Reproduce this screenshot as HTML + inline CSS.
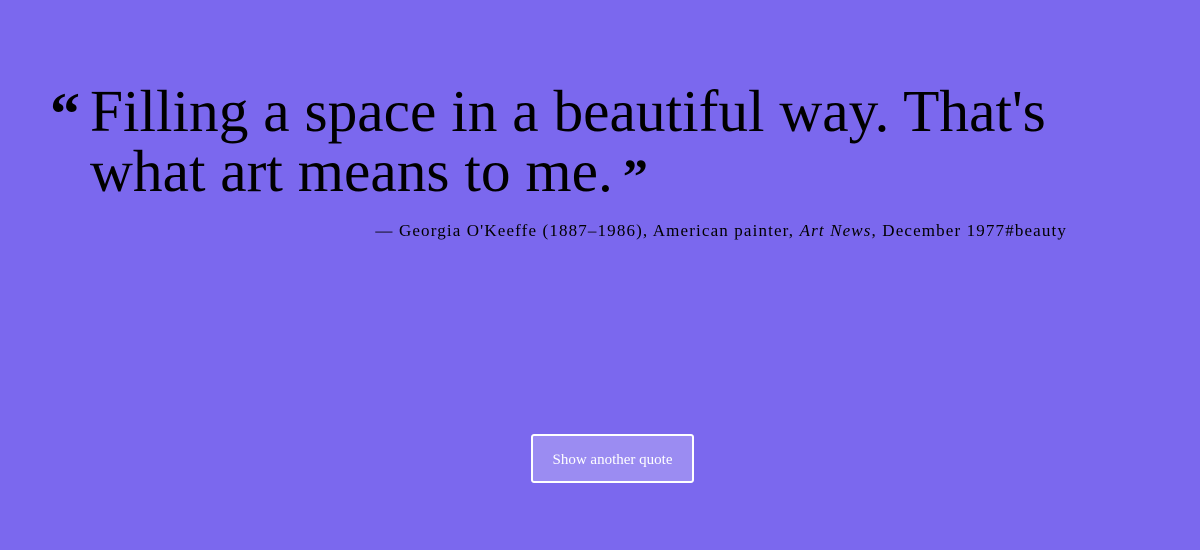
<!DOCTYPE html>
<html><head><style>
html,body{margin:0;padding:0;width:1200px;height:550px;background:#7b68ee;overflow:hidden;font-family:"Liberation Serif",serif;}
.q{position:absolute;left:90px;top:81px;width:1100px;font-size:59.4px;line-height:60px;color:#000;white-space:nowrap;}
.lq{position:absolute;left:50px;top:84px;font-size:60px;font-weight:bold;line-height:60px;}
.rq{font-size:50px;font-weight:bold;vertical-align:-2px;margin-left:10px;}
.a{position:absolute;right:133px;top:221px;font-size:17px;letter-spacing:1.14px;color:#000;white-space:nowrap;}
.b{position:absolute;left:531px;top:434px;width:159px;height:45px;border:2px solid #fff;border-radius:3px;background:#9b8cf2;color:#fff;font-size:15px;text-align:center;line-height:48px;}
</style></head><body>
<div class="lq">“</div>
<div class="q">Filling a space in a beautiful way. That's<br>what art means to me.<span class="rq">”</span></div>
<div class="a">— Georgia O'Keeffe (1887–1986), American painter, <i>Art News</i>, December 1977#beauty</div>
<div class="b">Show another quote</div>
</body></html>
